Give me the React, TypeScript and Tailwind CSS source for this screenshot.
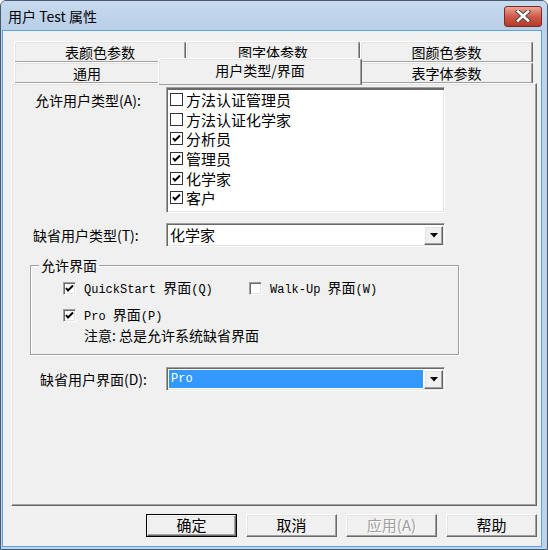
import React from 'react';

const raised =
  'border border-t-white border-l-white border-r-[#696969] border-b-[#696969] shadow-[inset_-1px_-1px_0_#a0a0a0,inset_1px_1px_0_#e3e3e3]';
const sunken =
  'border border-t-[#a0a0a0] border-l-[#a0a0a0] border-r-white border-b-white shadow-[inset_1px_1px_0_#696969,inset_-1px_-1px_0_#e3e3e3]';

const userTypes = [
  { label: '方法认证管理员', checked: false },
  { label: '方法认证化学家', checked: false },
  { label: '分析员', checked: true },
  { label: '管理员', checked: true },
  { label: '化学家', checked: true },
  { label: '客户', checked: true },
];

const Check = () => (
  <svg width="9" height="9" viewBox="0 0 9 9">
    <polyline points="1,4 3,6.5 8,1.5" fill="none" stroke="#000" strokeWidth="2" />
  </svg>
);

const ListCheck = ({ checked }: { checked: boolean }) => (
  <span className="w-[13px] h-[13px] border border-[#333] bg-white flex items-center justify-center shrink-0">
    {checked && <Check />}
  </span>
);

const BoxCheck = ({ checked }: { checked: boolean }) => (
  <span className={`w-[13px] h-[13px] bg-white flex items-center justify-center shrink-0 ${sunken}`}>
    {checked && <Check />}
  </span>
);

const DropButton = () => (
  <span className={`w-[19px] h-[19px] bg-[#f0f0f0] flex items-center justify-center shrink-0 ${raised}`}>
    <svg width="8" height="5" viewBox="0 0 8 5">
      <polygon points="0,0 8,0 4,4.5" fill="#000" />
    </svg>
  </span>
);

const Mono = ({ children }: { children: React.ReactNode }) => (
  <span className="font-['Liberation_Mono','Noto_Sans_CJK_SC',monospace] text-[12px]">{children}</span>
);

export default function App() {
  return (
    <div className="w-[548px] h-[550px] bg-[#bdd3eb] border border-[#4a5a6e] rounded-t-[6px] flex flex-col overflow-hidden text-black font-['Noto_Sans_CJK_SC',sans-serif]">
      {/* title bar */}
      <div className="h-[30px] flex items-center justify-between pl-[7px] pr-[5px] bg-gradient-to-b from-[#c6daef] to-[#b8cfe8]">
        <span className="text-[14px] leading-[18px]">用户 Test 属性</span>
        <span className="w-[38px] h-[21px] rounded-[3px] border border-[#7a2a22] bg-gradient-to-b from-[#e9a795] via-[#cf5b48] to-[#b53a28] flex items-center justify-center">
          <svg width="16" height="12" viewBox="0 0 16 12">
            <path d="M3 1.5 L13 10.5 M13 1.5 L3 10.5" stroke="#4a4a4a" strokeWidth="4.5" strokeLinecap="square" />
            <path d="M3 1.5 L13 10.5 M13 1.5 L3 10.5" stroke="#fff" strokeWidth="2.5" strokeLinecap="square" />
          </svg>
        </span>
      </div>

      {/* client */}
      <div className="flex-1 ml-[2px] mr-[6px] mb-[3px] bg-[#f0f0f0] shadow-[0_0_0_1px_#5aa4d8] pt-[10px] pl-[8px] pr-[4px] flex flex-col">
        {/* tabs */}
        <div className="ml-[3px] flex flex-col text-[14px]">
          <div className="flex h-[21px]">
            {[
              ['表颜色参数', 'w-[172px]'],
              ['图字体参数', 'w-[174px]'],
              ['图颜色参数', 'w-[173px]'],
            ].map(([t, w]) => (
              <div key={t} className={`${w} h-[21px] ${raised} border-b-0 rounded-t-[3px] bg-[#f0f0f0] flex justify-center leading-[20px]`}>
                {t}
              </div>
            ))}
          </div>
          <div className="flex h-[21px]">
            <div className={`w-[146px] h-[21px] ${raised} border-b-0 rounded-t-[3px] bg-[#f0f0f0] flex justify-center leading-[20px]`}>
              通用
            </div>
            <div className={`w-[204px] h-[27px] -mx-[2px] -mt-[4px] relative z-10 ${raised} border-b-0 rounded-t-[3px] bg-[#f0f0f0] flex justify-center leading-[22px]`}>
              用户类型/界面
            </div>
            <div className={`w-[173px] h-[21px] ${raised} border-b-0 rounded-t-[3px] bg-[#f0f0f0] flex justify-center leading-[20px]`}>
              表字体参数
            </div>
          </div>
        </div>

        {/* panel */}
        <div className={`h-[423px] bg-[#f0f0f0] ${raised} flex flex-col text-[14px]`}>
          <div className="flex items-start mt-[3px]">
            <span className="w-[154px] pl-[23px] mt-[3px] leading-[20px]">允许用户类型(A):</span>
            <div className={`w-[279px] h-[126px] bg-white pt-[2px] pl-[3px] ${sunken} shadow-[inset_1px_1px_0_#696969,inset_0_2px_0_#696969,inset_-1px_-1px_0_#e3e3e3]`}>
              {userTypes.map((u) => (
                <div key={u.label} className="h-[19.6px] flex items-center gap-[3px] text-[15px]">
                  <ListCheck checked={u.checked} />
                  <span className="leading-[19px]">{u.label}</span>
                </div>
              ))}
            </div>
          </div>

          <div className="flex items-center mt-[10px]">
            <span className="w-[154px] pl-[21px] leading-[20px]">缺省用户类型(T):</span>
            <div className={`w-[279px] h-[24px] bg-white flex items-center justify-between pl-[3px] pr-[1px] ${sunken}`}>
              <span className="text-[15px] leading-[20px]">化学家</span>
              <DropButton />
            </div>
          </div>

          <fieldset className="ml-[18px] mt-[9px] w-[429px] border border-[#a0a0a0] shadow-[1px_1px_0_#fff,inset_1px_1px_0_#fff] pb-[9px]">
            <legend className="ml-[8px] px-[2px] leading-[18px]">允许界面</legend>
            <div className="flex items-center h-[20px] mt-[4px] pl-[32px]">
              <div className="w-[186px] flex items-center gap-[8px]">
                <BoxCheck checked />
                <span className="leading-[20px]">
                  <Mono>QuickStart </Mono>界面<Mono>(Q)</Mono>
                </span>
              </div>
              <div className="flex items-center gap-[8px]">
                <BoxCheck checked={false} />
                <span className="leading-[20px]">
                  <Mono>Walk-Up </Mono>界面<Mono>(W)</Mono>
                </span>
              </div>
            </div>
            <div className="flex items-center h-[20px] mt-[7px] pl-[32px] gap-[8px]">
              <BoxCheck checked />
              <span className="leading-[20px]">
                <Mono>Pro </Mono>界面<Mono>(P)</Mono>
              </span>
            </div>
            <div className="h-[20px] pl-[53px] leading-[20px]">注意: 总是允许系统缺省界面</div>
          </fieldset>

          <div className="flex items-center mt-[12px]">
            <span className="w-[154px] pl-[28px] leading-[20px]">缺省用户界面(D):</span>
            <div className={`w-[279px] h-[24px] bg-white flex items-center justify-between p-[2px] pr-[1px] ${sunken}`}>
              <span className="flex-1 h-[18px] mr-[1px] bg-[#3399ff] text-white flex items-center pl-[2px]">
                <Mono>Pro</Mono>
              </span>
              <DropButton />
            </div>
          </div>
        </div>

        {/* buttons */}
        <div className="flex justify-end gap-[9px] mt-[8px] text-[15px]">
          <button className="w-[91px] h-[23px] border border-black bg-[#f0f0f0] p-0">
            <span className={`w-full h-full flex items-center justify-center ${raised}`}>确定</span>
          </button>
          <button className={`w-[91px] h-[23px] bg-[#f0f0f0] flex items-center justify-center ${raised}`}>取消</button>
          <button className={`w-[91px] h-[23px] bg-[#f0f0f0] flex items-center justify-center text-[#a0a0a0] [text-shadow:1px_1px_0_#fff] ${raised}`}>
            应用(A)
          </button>
          <button className={`w-[91px] h-[23px] bg-[#f0f0f0] flex items-center justify-center ${raised}`}>帮助</button>
        </div>
      </div>
    </div>
  );
}
